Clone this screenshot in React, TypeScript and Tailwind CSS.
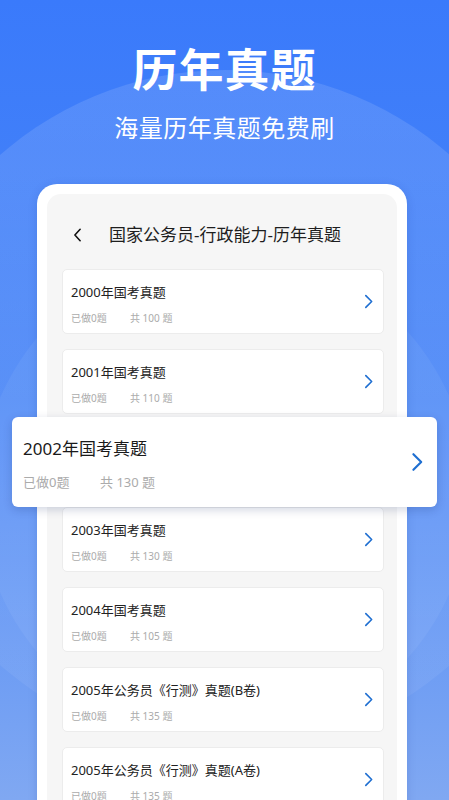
import React from "react";

type Paper = { title: string; done: number; total: number };

const papers: Paper[] = [
  { title: "2000年国考真题", done: 0, total: 100 },
  { title: "2001年国考真题", done: 0, total: 110 },
  { title: "2002年国考真题", done: 0, total: 130 },
  { title: "2003年国考真题", done: 0, total: 130 },
  { title: "2004年国考真题", done: 0, total: 105 },
  { title: "2005年公务员《行测》真题(B卷)", done: 0, total: 135 },
  { title: "2005年公务员《行测》真题(A卷)", done: 0, total: 135 },
];

const Chevron = ({ className }: { className: string }) => (
  <svg viewBox="0 0 10 16" className={className} fill="none">
    <path d="M2 1.5 L8.5 8 L2 14.5" stroke="#1f6fd1" strokeWidth="1.8" strokeLinecap="round" strokeLinejoin="round" />
  </svg>
);

const font = { fontFamily: '"Noto Sans", "Noto Sans CJK SC", sans-serif' };

const App: React.FC = () => {
  return (
    <div
      className="relative w-[449px] h-[800px] overflow-hidden bg-gradient-to-b from-[#3a7afb] via-[#4a86f6] to-[#80a8f2]"
      style={font}
    >
      {/* decorative circles */}
      <div className="absolute left-[-115px] top-[70px] w-[680px] h-[680px] rounded-full bg-gradient-to-b from-white/12 to-white/5" />
      <div className="absolute left-[-20px] top-[250px] w-[490px] h-[490px] rounded-full bg-white/5" />

      <div className="relative flex flex-col items-center">
        {/* Banner */}
        <h1 className="mt-[40px] text-[45px] leading-[60px] font-bold text-white tracking-[1px]">历年真题</h1>
        <p className="mt-[13px] text-[24px] leading-[30px] text-white tracking-[0.5px]">海量历年真题免费刷</p>

        {/* Phone frame */}
        <div className="mt-[41px] w-[370px] self-start ml-[37px] bg-white rounded-t-[20px] pt-[10px] px-[10px] shadow-[0_2px_10px_rgba(0,40,120,0.15)]">
          <div className="bg-[#f6f6f6] rounded-t-[14px] pl-[15px] pr-[13px] pb-[40px]">
            {/* Header */}
            <div className="flex items-center h-[75px] pt-[7px]">
              <svg viewBox="0 0 10 16" className="w-[9px] h-[14px] ml-[11px]" fill="none">
                <path d="M8 1.5 L2 8 L8 14.5" stroke="#111" strokeWidth="1.8" strokeLinecap="round" strokeLinejoin="round" />
              </svg>
              <span className="ml-[27px] text-[17px] text-[#1e1e1e]">国家公务员-行政能力-历年真题</span>
            </div>

            {/* List */}
            <div className="flex flex-col gap-[15px]">
              {papers.map((p, i) =>
                i === 2 ? (
                  <div
                    key={p.title}
                    className="relative z-10 -ml-[50px] -mr-[53px] -mt-[12px] -mb-[15px] h-[90px] bg-white rounded-[6px] shadow-[0_3px_10px_rgba(0,30,90,0.18)] flex items-center pl-[11px] pr-[14px]"
                  >
                    <div className="flex-1 pt-[4px]">
                      <div className="text-[17px] leading-[24px] text-[#1a1a1a]">{p.title}</div>
                      <div className="mt-[12px] flex text-[13px] leading-[18px] text-[#ababab]">
                        <span className="w-[77px]">已做{p.done}题</span>
                        <span>共 {p.total} 题</span>
                      </div>
                    </div>
                    <Chevron className="w-[12px] h-[20px]" />
                  </div>
                ) : (
                  <div
                    key={p.title}
                    className="h-[65px] bg-white rounded-[5px] border border-[#ececec] flex items-center pl-[8px] pr-[10px]"
                  >
                    <div className="flex-1 pt-[4px]">
                      <div className="text-[13px] leading-[18px] text-[#222]">{p.title}</div>
                      <div className="mt-[10px] flex text-[10px] leading-[14px] text-[#ababab]">
                        <span className="w-[59px]">已做{p.done}题</span>
                        <span>共 {p.total} 题</span>
                      </div>
                    </div>
                    <Chevron className="w-[9px] h-[15px]" />
                  </div>
                )
              )}
            </div>
          </div>
        </div>
      </div>
    </div>
  );
};

export default App;
